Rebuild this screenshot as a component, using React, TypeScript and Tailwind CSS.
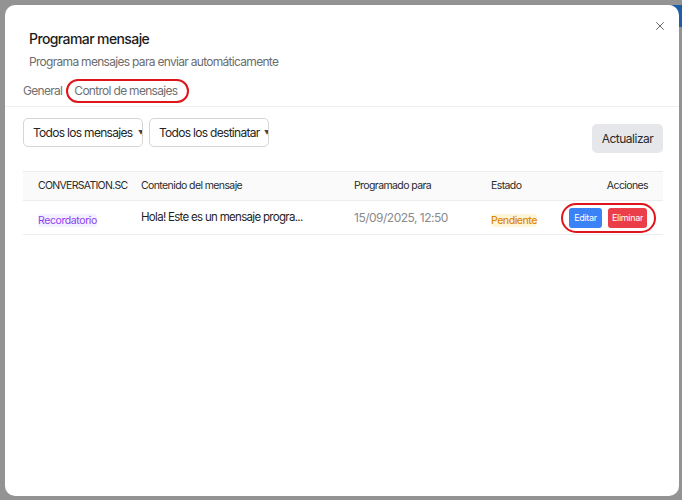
import { X } from "lucide-react";

type ScheduledRow = {
  tag: string;
  content: string;
  date: string;
  status: string;
};

const rows: ScheduledRow[] = [
  {
    tag: "Recordatorio",
    content: "Hola! Este es un mensaje progra...",
    date: "15/09/2025, 12:50",
    status: "Pendiente",
  },
];

const filters = ["Todos los mensajes", "Todos los destinatar"];

export default function App() {
  return (
    <div
      className="relative h-[500px] w-[682px] overflow-hidden bg-[#939393] pt-[5px] pr-[3px] pb-[4px] pl-[5px]"
      style={{ fontFamily: "Inter, 'Noto Sans', sans-serif" }}
    >
      {/* bit of the page behind the overlay */}
      <div className="absolute top-[5px] right-0 h-[22px] w-[10px] bg-[#1d5ea6]" />

      <div className="relative flex h-full flex-col rounded-[10px] bg-white">
        <button className="absolute top-[14px] right-[12px] text-[#555]">
          <X size={14} strokeWidth={1.5} />
        </button>

        <div className="px-6 pt-[24px]">
          <h2 className="text-[14px] font-medium leading-5 tracking-[-0.6px] text-[#1c1c1c]">
            Programar mensaje
          </h2>
          <p className="mt-[5px] text-[12px] leading-4 tracking-[-0.7px] text-[#6d6d6d]">
            Programa mensajes para enviar automáticamente
          </p>
        </div>

        <div className="mt-[9px] flex items-center gap-[4px] border-b border-[#eeeeee] pl-[18px] pb-[3px] text-[12px] leading-4 tracking-[-0.7px] text-[#707070]">
          <span>General</span>
          <span className="rounded-full border-2 border-[#e0141b] py-[2px] pr-[10px] pl-[6px]">
            Control de mensajes
          </span>
        </div>

        <div className="pt-[11px] pr-[16px] pl-[18px]">
          <div className="flex items-start justify-between">
            <div className="flex gap-[6px]">
              {filters.map((f) => (
                <div
                  key={f}
                  className="flex h-[29px] w-[120px] items-center overflow-hidden rounded-[5px] border border-[#d6d6d6] pl-[9px] text-[12px] tracking-[-0.7px] text-[#262626]"
                >
                  <span className="w-[104px] shrink-0 overflow-hidden whitespace-nowrap">{f}</span>
                  <span className="ml-[1px] text-[6px] text-[#444]">▼</span>
                </div>
              ))}
            </div>
            <button className="mt-[6px] h-[29px] w-[71px] rounded-[5px] bg-[#e6e7ea] text-[12px] tracking-[-0.5px] text-[#2a2a2a]">
              Actualizar
            </button>
          </div>

          <table className="mt-[18px] w-full table-fixed text-left">
            <thead>
              <tr className="h-[29px] border-t border-b border-[#ececec] bg-[#fafafa] text-[10.5px] tracking-[-0.6px] text-[#2a2a2a]">
                <th className="w-[118px] pl-[15px] font-normal tracking-[-0.7px]">CONVERSATION.SC</th>
                <th className="w-[213px] font-normal">Contenido del mensaje</th>
                <th className="w-[137px] font-normal">Programado para</th>
                <th className="w-[60px] font-normal">Estado</th>
                <th className="pr-[15px] text-right font-normal">Acciones</th>
              </tr>
            </thead>
            <tbody>
              {rows.map((r) => (
                <tr key={r.tag} className="h-[34px] border-b border-[#ececec]">
                  <td className="pl-[15px]">
                    <span className="rounded-[3px] bg-[#f5f0ff] text-[10.5px] tracking-[-0.4px] text-[#8b3ff0]">
                      {r.tag}
                    </span>
                  </td>
                  <td className="whitespace-nowrap text-[11.5px] tracking-[-0.7px] text-[#1f1f1f]">
                    {r.content}
                  </td>
                  <td className="whitespace-nowrap text-[12px] tracking-[-0.5px] text-[#8a8a8a]">
                    {r.date}
                  </td>
                  <td>
                    <span className="rounded-[4px] bg-[#fdf5d7] text-[10.5px] font-medium tracking-[-0.5px] text-[#dd8a0c]">
                      {r.status}
                    </span>
                  </td>
                  <td className="pr-[7px]">
                    <div className="ml-auto flex w-fit gap-[6px] rounded-full border-2 border-[#e0141b] py-[3px] pr-[7px] pl-[6px]">
                      <button className="h-[20px] w-[33px] rounded-[3px] bg-[#3b82f6] text-[9px] tracking-[-0.3px] text-white">
                        Editar
                      </button>
                      <button className="h-[20px] w-[39px] rounded-[3px] bg-[#ea3e48] text-[9px] tracking-[-0.3px] text-white">
                        Eliminar
                      </button>
                    </div>
                  </td>
                </tr>
              ))}
            </tbody>
          </table>
        </div>
      </div>
    </div>
  );
}
